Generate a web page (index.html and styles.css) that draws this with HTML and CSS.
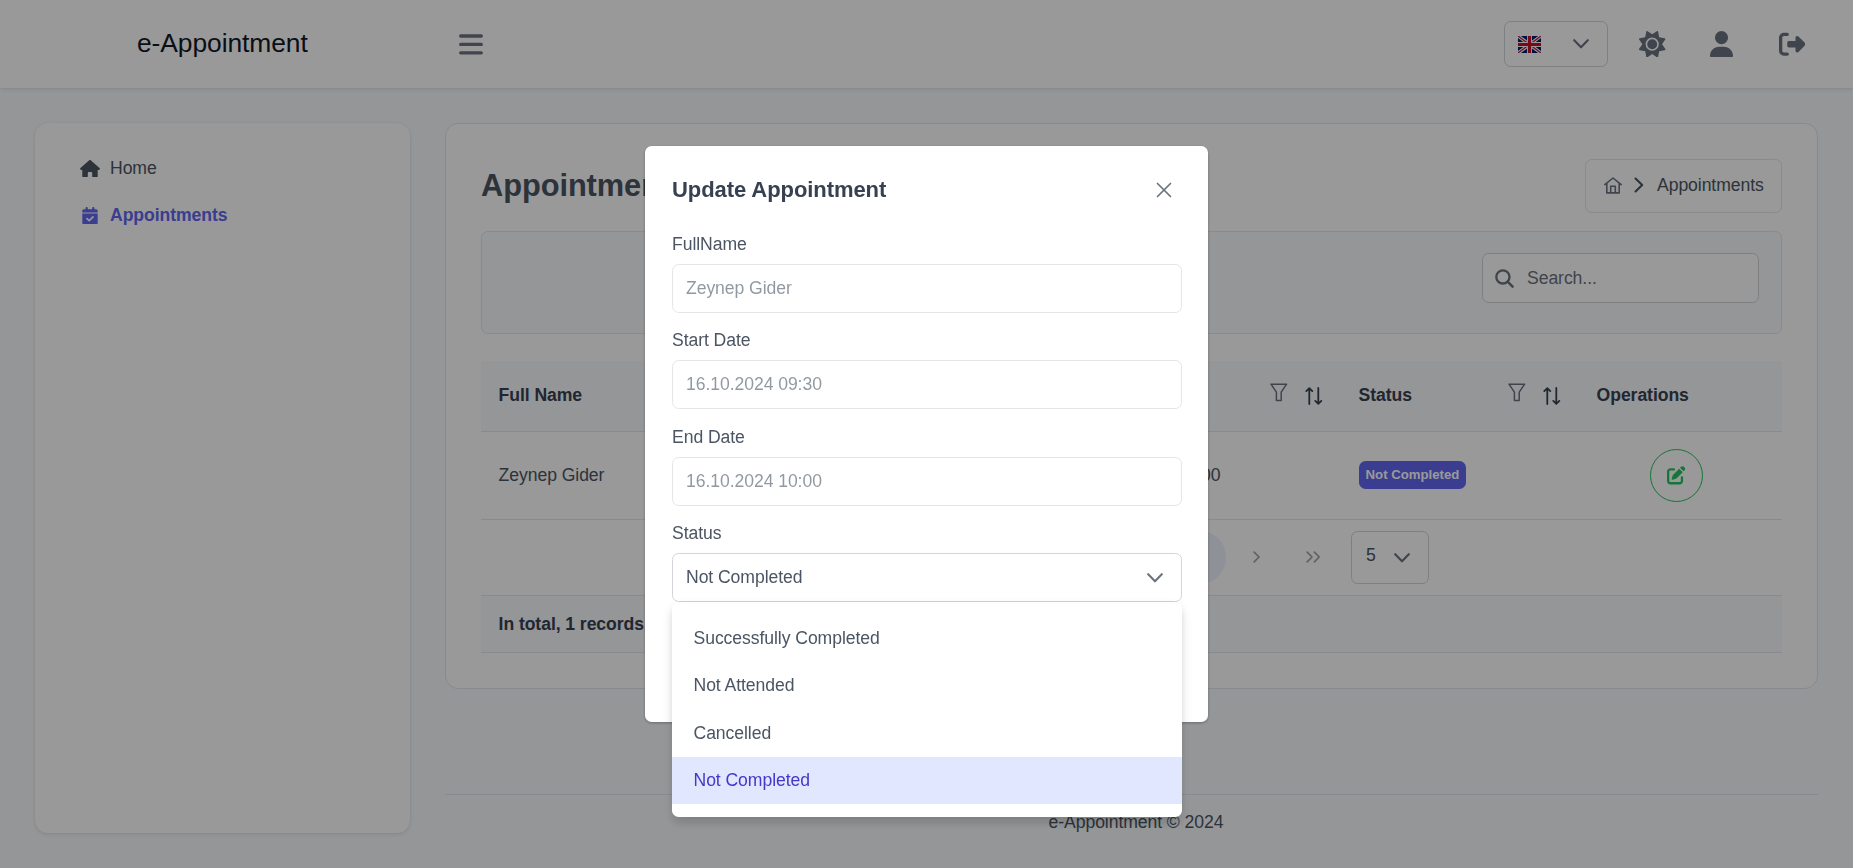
FILE: index.html
```html
<!DOCTYPE html>
<html lang="en">
<head>
<meta charset="utf-8">
<title>e-Appointment</title>
<link rel="stylesheet" href="styles.css">
</head>
<body>
<svg class="defs" width="0" height="0">
  <symbol id="chev" viewBox="0 0 16 10"><path d="M1.2 1.2L8 8.3L14.8 1.2" fill="none" stroke="currentColor" stroke-width="2.1" stroke-linecap="round" stroke-linejoin="round"/></symbol>
  <symbol id="filter" viewBox="0 0 18 19"><path d="M1 1.2H16.6L11.2 9.2V17.6H6.4V9.2Z" fill="none" stroke="currentColor" stroke-width="1.5" stroke-linejoin="round"/></symbol>
  <symbol id="sort" viewBox="0 0 18 18"><path d="M4.3 17V1.2M1.3 4.1L4.3 1.1L7.3 4.1M13.3 1V16.8M10.3 13.9L13.3 16.9L16.3 13.9" fill="none" stroke="currentColor" stroke-width="1.8" stroke-linecap="round" stroke-linejoin="round"/></symbol>
</svg>

<header class="topbar">
  <div class="brand">e-Appointment</div>
  <svg class="menu-toggle" viewBox="0 0 24 21"><path d="M1.7 2H22.3M1.7 10.4H22.3M1.7 18.8H22.3" fill="none" stroke="currentColor" stroke-width="3.3" stroke-linecap="round"/></svg>
  <div class="top-actions">
    <div class="lang">
      <svg class="flag" viewBox="0 0 23 17"><path fill="#012169" d="M0 0H23V17H0z"/><path d="M0 0L23 17M23 0L0 17" stroke="#fff" stroke-width="3.4"/><path d="M0 0L23 17M23 0L0 17" stroke="#c8102e" stroke-width="1.2"/><path d="M11.5 0V17M0 8.5H23" stroke="#fff" stroke-width="5"/><path d="M11.5 0V17M0 8.5H23" stroke="#c8102e" stroke-width="3.2"/></svg>
      <svg class="chev"><use href="#chev"/></svg>
    </div>
    <svg class="act sun" viewBox="0 0 512 512"><path fill="currentColor" d="M361.5 1.2c5 2.1 8.6 6.6 9.6 11.9L391 121l107.9 19.8c5.3 1 9.8 4.6 11.9 9.6s1.5 10.7-1.6 15.2L446.9 256l62.3 90.3c3.1 4.5 3.7 10.2 1.6 15.2s-6.6 8.6-11.9 9.6L391 391 371.1 498.9c-1 5.3-4.6 9.8-9.6 11.9s-10.7 1.5-15.2-1.6L256 446.9l-90.3 62.3c-4.5 3.1-10.2 3.7-15.2 1.6s-8.6-6.6-9.6-11.9L121 391 13.1 371.1c-5.3-1-9.8-4.6-11.9-9.6s-1.5-10.7 1.6-15.2L65.1 256 2.8 165.7c-3.1-4.5-3.7-10.2-1.6-15.2s6.6-8.6 11.9-9.6L121 121 140.9 13.1c1-5.3 4.6-9.8 9.6-11.9s10.7-1.5 15.2 1.6L256 65.1 346.3 2.8c4.5-3.1 10.2-3.7 15.2-1.6zM160 256a96 96 0 1 1 192 0 96 96 0 1 1 -192 0zm224 0a128 128 0 1 0 -256 0 128 128 0 1 0 256 0z"/></svg>
    <svg class="act user" viewBox="0 0 448 512"><path fill="currentColor" d="M224 256A128 128 0 1 0 224 0a128 128 0 1 0 0 256zm-45.7 48C79.8 304 0 383.8 0 482.3C0 498.7 13.3 512 29.7 512H418.3c16.4 0 29.7-13.3 29.7-29.7C448 383.8 368.2 304 269.7 304H178.3z"/></svg>
    <svg class="act exit" viewBox="0 0 512 512"><path fill="currentColor" d="M377.9 105.9L500.7 228.7c7.2 7.2 11.3 17.1 11.3 27.3s-4.1 20.1-11.3 27.3L377.9 406.1c-6.4 6.4-15 9.9-24 9.9c-18.7 0-33.9-15.2-33.9-33.9l0-62.1-128 0c-17.7 0-32-14.3-32-32l0-64c0-17.7 14.3-32 32-32l128 0 0-62.1c0-18.7 15.2-33.9 33.9-33.9c9 0 17.6 3.6 24 9.9zM160 96L96 96c-17.7 0-32 14.3-32 32l0 256c0 17.7 14.3 32 32 32l64 0c17.7 0 32 14.3 32 32s-14.3 32-32 32l-64 0c-53 0-96-43-96-96L0 128C0 75 43 32 96 32l64 0c17.7 0 32 14.3 32 32s-14.3 32-32 32z"/></svg>
  </div>
</header>

<div class="layout">
  <nav class="sidebar">
    <a class="nav-item"><svg class="nav-icon" viewBox="0 0 576 512"><path fill="currentColor" d="M575.8 255.5c0 18-15 32.1-32 32.1h-32l.7 160.2c0 2.7-.2 5.4-.5 8.1V472c0 22.1-17.9 40-40 40H456c-1.1 0-2.2 0-3.3-.1c-1.4 .1-2.8 .1-4.2 .1H416 392c-22.1 0-40-17.9-40-40V448 384c0-17.7-14.3-32-32-32H256c-17.7 0-32 14.3-32 32v64 24c0 22.1-17.9 40-40 40H160 128.1c-1.5 0-3-.1-4.5-.2c-1.2 .1-2.4 .2-3.6 .2H104c-22.1 0-40-17.9-40-40V360c0-.9 0-1.9 .1-2.8V287.6H32c-18 0-32-14-32-32.1c0-9 3-17 10-24L266.4 8c7-7 15-8 22-8s15 2 21 7L564.8 231.5c8 7 12 15 11 24z"/></svg><span>Home</span></a>
    <a class="nav-item active"><svg class="nav-icon" viewBox="0 0 448 512"><path fill="currentColor" d="M128 0c17.7 0 32 14.3 32 32V64H288V32c0-17.7 14.3-32 32-32s32 14.3 32 32V64h48c26.5 0 48 21.5 48 48v48H0V112C0 85.5 21.5 64 48 64H96V32c0-17.7 14.3-32 32-32zM0 192H448V464c0 26.5-21.5 48-48 48H48c-26.5 0-48-21.5-48-48V192zM329 305c9.4-9.4 9.4-24.6 0-33.9s-24.6-9.4-33.9 0l-95 95-47-47c-9.4-9.4-24.6-9.4-33.9 0s-9.4 24.6 0 33.9l64 64c9.4 9.4 24.6 9.4 33.9 0L329 305z"/></svg><span>Appointments</span></a>
  </nav>

  <div class="main">
    <section class="card">
      <div class="card-head">
        <h1 class="title">Appointments</h1>
        <div class="crumbs">
          <svg class="crumb-home" viewBox="0 0 18 17"><path d="M.8 7.6L9 1L17.2 7.6M2.8 6.3V15.9H15.2V6.3M6.7 15.6V9.2H11.3V15.6" fill="none" stroke="currentColor" stroke-width="1.6" stroke-linecap="round" stroke-linejoin="round"/></svg>
          <svg class="crumb-sep" viewBox="0 0 10 16"><path d="M1.5 1.5L8.2 8L1.5 14.5" fill="none" stroke="currentColor" stroke-width="2.1" stroke-linecap="round" stroke-linejoin="round"/></svg>
          <span>Appointments</span>
        </div>
      </div>
      <div class="toolbar">
        <div class="search">
          <svg class="search-icon" viewBox="0 0 19 19"><circle cx="7.9" cy="7.9" r="6.6" fill="none" stroke="currentColor" stroke-width="2.3"/><path d="M12.6 12.6L17.6 17.6" stroke="currentColor" stroke-width="2.5" stroke-linecap="round"/></svg>
          <span>Search...</span>
        </div>
      </div>
      <div class="table">
        <div class="row head">
          <div class="cell">Full Name<span class="tools"><svg class="filter"><use href="#filter"/></svg><svg class="sort"><use href="#sort"/></svg></span></div>
          <div class="cell">Start Date<span class="tools"><svg class="filter"><use href="#filter"/></svg><svg class="sort"><use href="#sort"/></svg></span></div>
          <div class="cell">End Date<span class="tools"><svg class="filter"><use href="#filter"/></svg><svg class="sort"><use href="#sort"/></svg></span></div>
          <div class="cell">Status<span class="tools"><svg class="filter"><use href="#filter"/></svg><svg class="sort"><use href="#sort"/></svg></span></div>
          <div class="cell">Operations</div>
        </div>
        <div class="row body">
          <div class="cell">Zeynep Gider</div>
          <div class="cell">16.10.2024 09:30</div>
          <div class="cell">16.10.2024 10:00</div>
          <div class="cell"><span class="tag">Not Completed</span></div>
          <div class="cell ops"><span class="edit"><svg viewBox="0 0 512 512"><path fill="currentColor" d="M471.6 21.7c-21.9-21.9-57.3-21.9-79.2 0L362.3 51.7l97.9 97.9 30.1-30.1c21.9-21.9 21.9-57.3 0-79.2L471.6 21.7zm-299.2 220c-6.1 6.1-10.8 13.6-13.5 21.9l-29.6 88.8c-2.9 8.6-.6 18.1 5.8 24.6s15.9 8.7 24.6 5.8l88.8-29.6c8.2-2.7 15.7-7.4 21.9-13.5L437.7 172.3 339.7 74.3 172.4 241.7zM96 64C43 64 0 107 0 160V416c0 53 43 96 96 96H352c53 0 96-43 96-96V320c0-17.7-14.3-32-32-32s-32 14.3-32 32v96c0 17.7-14.3 32-32 32H96c-17.7 0-32-14.3-32-32V160c0-17.7 14.3-32 32-32h96c17.7 0 32-14.3 32-32s-14.3-32-32-32H96z"/></svg></span></div>
        </div>
        <div class="pager">
          <span class="page current">1</span>
          <span class="page"><svg width="8" height="12" viewBox="0 0 8 12"><path d="M1.2 1.2L6 6L1.2 10.8" fill="none" stroke="currentColor" stroke-width="1.7" stroke-linecap="round" stroke-linejoin="round"/></svg></span>
          <span class="page"><svg width="15" height="12" viewBox="0 0 15 12"><path d="M1.2 1.2L6 6L1.2 10.8M8.4 1.2L13.2 6L8.4 10.8" fill="none" stroke="currentColor" stroke-width="1.7" stroke-linecap="round" stroke-linejoin="round"/></svg></span>
          <span class="page-size"><span>5</span><svg class="chev"><use href="#chev"/></svg></span>
        </div>
        <div class="summary">In total, 1 records.</div>
      </div>
    </section>
    <footer class="footer">e-Appointment © 2024</footer>
  </div>
</div>

<div class="mask">
  <div class="dialog">
    <div class="dialog-head">
      <h2 class="dialog-title">Update Appointment</h2>
      <svg class="close" viewBox="0 0 16 16"><path d="M1.5 1.5L14.5 14.5M14.5 1.5L1.5 14.5" stroke="currentColor" stroke-width="1.7" stroke-linecap="round"/></svg>
    </div>
    <div class="field"><label class="label">FullName</label><div class="input disabled">Zeynep Gider</div></div>
    <div class="field"><label class="label">Start Date</label><div class="input disabled">16.10.2024 09:30</div></div>
    <div class="field"><label class="label">End Date</label><div class="input disabled">16.10.2024 10:00</div></div>
    <div class="field"><label class="label">Status</label><div class="input select"><span>Not Completed</span><svg class="chev"><use href="#chev"/></svg>
      <ul class="options">
        <li class="option">Successfully Completed</li>
        <li class="option">Not Attended</li>
        <li class="option">Cancelled</li>
        <li class="option selected">Not Completed</li>
      </ul></div>
    </div>
  </div>
</div>
</body>
</html>
```
FILE: styles.css
```css
* { box-sizing: border-box; }
body {
  margin: 0;
  height: 868px;
  overflow: hidden;
  background: #f8fafc;
  color: #4b5563;
  font: 17.6px/21px "Liberation Sans", Arial, sans-serif;
  letter-spacing: -0.07px;
}
.defs { position: absolute; }
svg { display: block; flex: none; }

.topbar {
  height: 88px;
  display: flex;
  align-items: center;
  padding: 0 48px 0 137px;
  background: #fff;
  color: #6b7280;
  box-shadow: 0 3px 5px rgba(0,0,0,.02), 0 0 2px rgba(0,0,0,.05), 0 1px 4px rgba(0,0,0,.08);
}
.brand { width: 322px; font-size: 26.4px; line-height: 32px; color: #111827; padding-bottom: 2px; }
.menu-toggle { width: 24px; height: 21px; }
.top-actions { margin-left: auto; display: flex; align-items: center; }
.lang {
  width: 104px;
  height: 46px;
  display: flex;
  align-items: center;
  justify-content: space-between;
  padding: 0 18px 0 13px;
  border: 1px solid #d1d5db;
  border-radius: 6.6px;
}
.flag { width: 23px; height: 17px; }
.chev { width: 16px; height: 10px; color: #6b7280; }
.act { height: 26.4px; }
.sun { width: 26.4px; margin-left: 31px; }
.user { width: 23px; margin-left: 44px; }
.exit { width: 26.4px; margin-left: 46px; }

.layout { display: flex; gap: 35px; padding: 35px 35px 0; height: 780px; }
.sidebar {
  width: 375px;
  height: 710px;
  padding: 22px 45px;
  background: #fff;
  border-radius: 13.2px;
  box-shadow: 0 3px 5px rgba(0,0,0,.02), 0 0 2px rgba(0,0,0,.05), 0 1px 4px rgba(0,0,0,.08);
}
.nav-item { display: flex; align-items: center; height: 47px; gap: 10px; }
.nav-icon { width: 20px; height: 17.6px; }
.active { color: #6366f1; font-weight: 700; }

.main { flex: 1; display: flex; flex-direction: column; }
.card {
  height: 566px;
  padding: 35px;
  background: #fff;
  border: 1px solid #dfe7ef;
  border-radius: 13.2px;
}
.card-head { display: flex; justify-content: space-between; height: 54px; }
.title { margin: 0; padding-top: 8px; font-size: 30.8px; line-height: 37px; }
.crumbs {
  width: 197px;
  display: flex;
  align-items: center;
  padding: 0 0 2px 18px;
  border: 1px solid #e5e7eb;
  border-radius: 6.6px;
}
.crumb-home { width: 18px; height: 17px; margin-right: 12px; color: #6b7280; }
.crumb-sep { width: 10px; height: 16px; margin-right: 13px; }
.toolbar {
  height: 103px;
  margin-top: 18px;
  padding: 21px 22px;
  display: flex;
  justify-content: flex-end;
  background: #f8fafc;
  border: 1px solid #e5e7eb;
  border-radius: 6.6px;
}
.search {
  width: 277px;
  height: 50px;
  display: flex;
  align-items: center;
  gap: 13px;
  padding-left: 12px;
  background: #fff;
  border: 1px solid #d1d5db;
  border-radius: 6.6px;
  color: #6b7280;
}
.search-icon { width: 19px; height: 19px; }

.table { margin-top: 27px; }
.row { display: grid; grid-template-columns: 312px 274px 274px 238px 203px; border-bottom: 1px solid #e5e7eb; }
.cell { display: flex; align-items: center; padding: 0 17.6px; }
.head { height: 71px; background: #f8fafc; color: #374151; font-weight: 700; padding-bottom: 1px; }
.tools { display: flex; gap: 17px; margin-left: auto; color: #374151; }
.filter { width: 18px; height: 19px; margin-top: -3px; color: #6b7280; }
.sort { width: 18px; height: 18px; margin-top: 1px; }
.body { height: 88px; }
.tag {
  height: 28px;
  margin-bottom: 1px;
  padding: 0 7px;
  background: #6366f1;
  border-radius: 6.6px;
  color: #fff;
  font-size: 13.2px;
  line-height: 27px;
  font-weight: 700;
  letter-spacing: 0;
}
.ops { justify-content: center; padding: 0 8px 0 0; }
.edit {
  width: 53px;
  height: 53px;
  display: flex;
  align-items: center;
  justify-content: center;
  border: 1px solid #22c55e;
  border-radius: 50%;
  color: #22c55e;
}
.edit svg { width: 18.4px; height: 18.4px; }
.pager { height: 75px; display: flex; align-items: center; justify-content: flex-end; padding-right: 353px; }
.page { width: 52.8px; height: 52.8px; margin-right: 4px; display: flex; align-items: center; justify-content: center; color: #9ca3af; }
.current { background: #eef2ff; border-radius: 50%; color: #4338ca; }
.page-size {
  width: 78px;
  height: 53px;
  margin-left: 7px;
  display: flex;
  justify-content: space-between;
  padding: 13px 18px 0 14px;
  border: 1px solid #d1d5db;
  border-radius: 6.6px;
}
.page-size .chev { margin-top: 8px; }
.summary {
  height: 58px;
  padding: 18px 17.6px;
  background: #f8fafc;
  border-top: 1px solid #e5e7eb;
  border-bottom: 1px solid #e5e7eb;
  color: #374151;
  font-weight: 700;
}
.footer { margin-top: 105px; border-top: 1px solid #dfe7ef; padding: 17px 0 0 9px; text-align: center; }

.mask { position: fixed; inset: 0; display: flex; align-items: center; justify-content: center; background: rgba(0,0,0,.4); }
.dialog {
  width: 563px;
  height: 576px;
  padding: 0 26px 0 27px;
  background: #fff;
  border-radius: 6.6px;
  box-shadow: 0 1px 3px rgba(0,0,0,.3);
}
.dialog-head { display: flex; align-items: center; justify-content: space-between; height: 87px; padding-right: 10px; }
.dialog-title { margin: 0; font-size: 22px; line-height: 26px; color: #374151; }
.close { width: 16px; height: 16px; color: #6b7280; }
.field { height: 96.4px; }
.label { display: block; height: 31px; padding-top: 1px; }
.input { height: 49px; padding: 0 13px; display: flex; align-items: center; border: 1px solid #d1d5db; border-radius: 6.6px; }
.disabled { opacity: .6; color: #4b5563; }
.select { position: relative; justify-content: space-between; padding-right: 18px; }
.options {
  position: absolute;
  left: -1px;
  right: -1px;
  top: 48px;
  height: 215px;
  margin: 0;
  padding: 13px 0;
  list-style: none;
  background: #fff;
  border-radius: 6.6px;
  box-shadow: 0 0 4px rgba(0,0,0,.03), 0 7px 9px rgba(0,0,0,.1), 0 5px 14px rgba(0,0,0,.06);
}
.option { height: 47.3px; padding: 12.8px 21.5px; }
.selected { background: #e0e7ff; color: #4338ca; }
```
